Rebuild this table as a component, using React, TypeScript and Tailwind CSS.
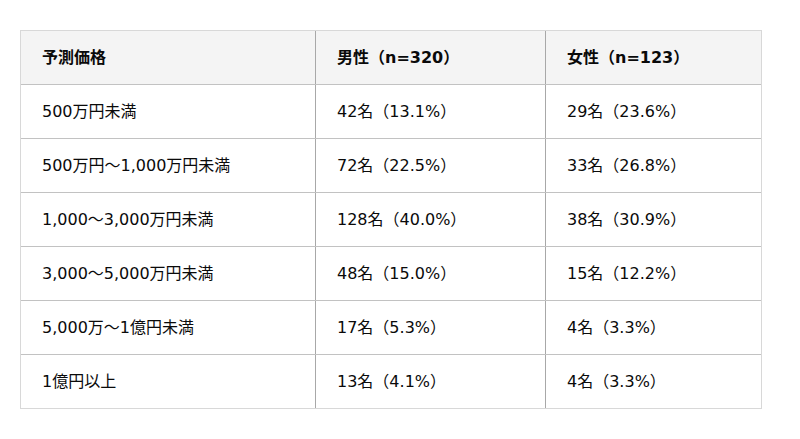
const rows: [string, string, string][] = [
  ['500万円未満', '42名（13.1%）', '29名（23.6%）'],
  ['500万円〜1,000万円未満', '72名（22.5%）', '33名（26.8%）'],
  ['1,000〜3,000万円未満', '128名（40.0%）', '38名（30.9%）'],
  ['3,000〜5,000万円未満', '48名（15.0%）', '15名（12.2%）'],
  ['5,000万〜1億円未満', '17名（5.3%）', '4名（3.3%）'],
  ['1億円以上', '13名（4.1%）', '4名（3.3%）'],
];

function Row({ cells, header, last }: { cells: [string, string, string]; header?: boolean; last?: boolean }) {
  return (
    <div
      className={`grid grid-cols-[295px_230px_217px] h-[54px] border-b ${
        last ? 'border-[#d8d8d8]' : 'border-[#c2c2c2]'
      } ${header ? 'bg-[#f4f4f4] font-bold' : 'bg-white'}`}
    >
      <div className="flex items-center px-[21px] border-r border-[#a8a8a8]">{cells[0]}</div>
      <div className="flex items-center px-[21px] border-r border-[#a8a8a8]">{cells[1]}</div>
      <div className="flex items-center px-[21px]">{cells[2]}</div>
    </div>
  );
}

export default function App() {
  return (
    <div className="w-[800px] h-[439px] bg-white pt-[30px] pl-[20px] text-[16px] text-[#0a0a0a] font-['DejaVu_Sans','Noto_Sans_CJK_JP',sans-serif]">
      <div className="w-[742px] border-t border-x border-[#d8d8d8]">
        <Row cells={['予測価格', '男性（n=320）', '女性（n=123）']} header />
        {rows.map((r, i) => (
          <Row key={i} cells={r} last={i === rows.length - 1} />
        ))}
      </div>
    </div>
  );
}
